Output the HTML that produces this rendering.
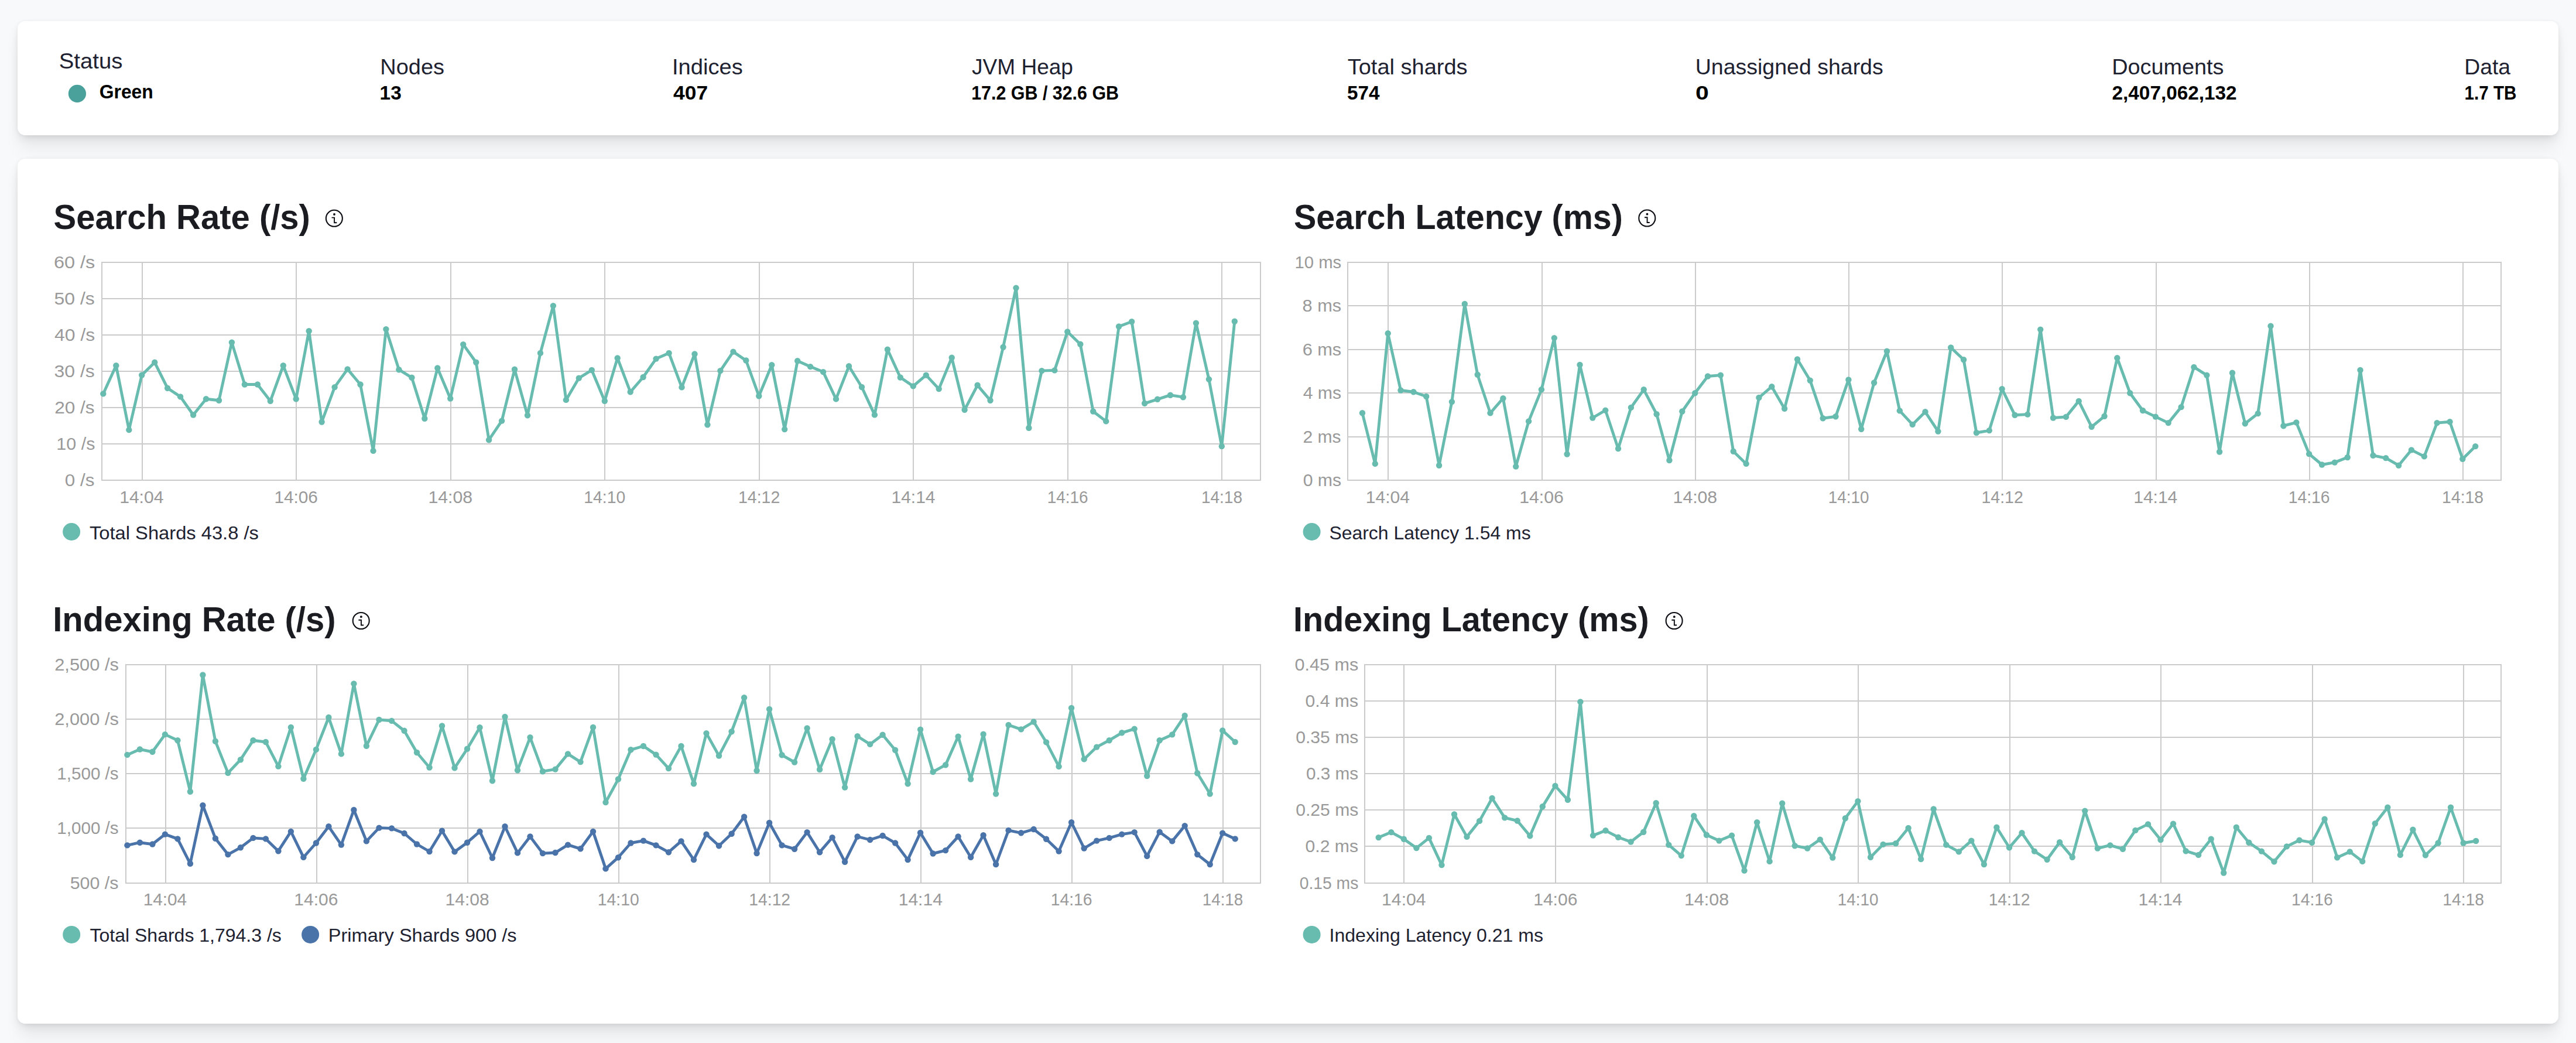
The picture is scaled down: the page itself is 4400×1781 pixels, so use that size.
<!DOCTYPE html>
<html><head><meta charset="utf-8"><style>
html,body{margin:0;padding:0;width:4400px;height:1781px;overflow:hidden;background:#F8F9FB;}
.p{position:absolute;left:30px;width:4340px;background:#fff;border-radius:13px;box-shadow:0 1.8px 8px -2px rgba(0,0,0,0.08),0 5.2px 16px -2px rgba(0,0,0,0.06),0 11.4px 24px -2px rgba(0,0,0,0.05),0 30px 30px -2px rgba(0,0,0,0.04);}
svg{position:absolute;left:0;top:0;}
text{font-family:"Liberation Sans",sans-serif;}
.st{font-size:37.5px;fill:#1D2130;}
.sv{font-size:32.5px;font-weight:bold;fill:#000;}
.tt{font-size:58.5px;font-weight:bold;fill:#1A1C21;}
.ax{font-size:30px;fill:#999999;letter-spacing:1.3px;}
.lg{font-size:31.5px;fill:#1D2130;}
</style></head><body>
<div class="p" style="top:36px;height:195px"></div>
<div class="p" style="top:271px;height:1477px"></div>
<svg width="4400" height="1781" viewBox="0 0 4400 1781">
<text class="st" transform="translate(100.73 116.60) scale(1.0219 1)" style="letter-spacing:0">Status</text>
<circle cx="131.9" cy="159.9" r="15.1" fill="#4AA19B"/>
<text class="sv" transform="translate(169.74 168.40) scale(0.9802 1)" style="letter-spacing:0">Green</text>
<text class="st" transform="translate(649.36 126.50) scale(1.0117 1)" style="letter-spacing:0">Nodes</text>
<text class="sv" transform="translate(648.62 169.70) scale(1.0264 1)" style="letter-spacing:0">13</text>
<text class="st" transform="translate(1147.93 126.50) scale(1.0178 1)" style="letter-spacing:0">Indices</text>
<text class="sv" transform="translate(1150.05 169.70) scale(1.0894 1)" style="letter-spacing:0">407</text>
<text class="st" transform="translate(1660.01 126.50) scale(0.9884 1)" style="letter-spacing:0">JVM Heap</text>
<text class="sv" transform="translate(1659.13 169.70) scale(0.9366 1)" style="letter-spacing:0">17.2 GB / 32.6 GB</text>
<text class="st" transform="translate(2301.68 126.50) scale(1.0141 1)" style="letter-spacing:0">Total shards</text>
<text class="sv" transform="translate(2301.06 169.70) scale(1.0236 1)" style="letter-spacing:0">574</text>
<text class="st" transform="translate(2895.70 126.50) scale(1.0000 1)" style="letter-spacing:0">Unassigned shards</text>
<text class="sv" transform="translate(2896.07 169.70) scale(1.2622 1)" style="letter-spacing:0">0</text>
<text class="st" transform="translate(3607.16 126.50) scale(1.0088 1)" style="letter-spacing:0">Documents</text>
<text class="sv" transform="translate(3607.55 169.70) scale(1.0254 1)" style="letter-spacing:0">2,407,062,132</text>
<text class="st" transform="translate(4209.29 126.50) scale(0.9954 1)" style="letter-spacing:0">Data</text>
<text class="sv" transform="translate(4209.45 169.70) scale(0.9129 1)" style="letter-spacing:0">1.7 TB</text>
<text class="tt" transform="translate(91.61 390.70) scale(0.9913 1)" style="letter-spacing:0">Search Rate (/s)</text>
<text class="tt" transform="translate(2209.93 390.70) scale(0.9824 1)" style="letter-spacing:0">Search Latency (ms)</text>
<text class="tt" transform="translate(90.23 1078.00) scale(0.9913 1)" style="letter-spacing:0">Indexing Rate (/s)</text>
<text class="tt" transform="translate(2209.06 1078.00) scale(0.9840 1)" style="letter-spacing:0">Indexing Latency (ms)</text>
<g><circle cx="570.85" cy="372.8" r="14" fill="none" stroke="#0B0D12" stroke-width="2.1"/><circle cx="571.00" cy="366.00" r="1.9" fill="#0B0D12"/><path d="M566.55 371.60 H571.10 V380.30 H575.35" fill="none" stroke="#0B0D12" stroke-width="1.9" stroke-linejoin="miter"/></g>
<g><circle cx="2813.3" cy="372.5" r="14" fill="none" stroke="#0B0D12" stroke-width="2.1"/><circle cx="2813.45" cy="365.70" r="1.9" fill="#0B0D12"/><path d="M2809.00 371.30 H2813.55 V380.00 H2817.80" fill="none" stroke="#0B0D12" stroke-width="1.9" stroke-linejoin="miter"/></g>
<g><circle cx="616.7" cy="1060" r="14" fill="none" stroke="#0B0D12" stroke-width="2.1"/><circle cx="616.85" cy="1053.20" r="1.9" fill="#0B0D12"/><path d="M612.40 1058.80 H616.95 V1067.50 H621.20" fill="none" stroke="#0B0D12" stroke-width="1.9" stroke-linejoin="miter"/></g>
<g><circle cx="2859.6" cy="1060" r="14" fill="none" stroke="#0B0D12" stroke-width="2.1"/><circle cx="2859.75" cy="1053.20" r="1.9" fill="#0B0D12"/><path d="M2855.30 1058.80 H2859.85 V1067.50 H2864.10" fill="none" stroke="#0B0D12" stroke-width="1.9" stroke-linejoin="miter"/></g>
<g stroke="#CBCBCB" stroke-width="2" fill="none"><line x1="174" y1="448" x2="2153" y2="448"/><line x1="174" y1="510" x2="2153" y2="510"/><line x1="174" y1="572" x2="2153" y2="572"/><line x1="174" y1="634" x2="2153" y2="634"/><line x1="174" y1="696" x2="2153" y2="696"/><line x1="174" y1="758" x2="2153" y2="758"/><line x1="174" y1="820" x2="2153" y2="820"/><line x1="243" y1="448" x2="243" y2="820"/><line x1="506" y1="448" x2="506" y2="820"/><line x1="770" y1="448" x2="770" y2="820"/><line x1="1033" y1="448" x2="1033" y2="820"/><line x1="1297" y1="448" x2="1297" y2="820"/><line x1="1560" y1="448" x2="1560" y2="820"/><line x1="1824" y1="448" x2="1824" y2="820"/><line x1="2087" y1="448" x2="2087" y2="820"/><rect x="174" y="448" width="1979" height="372" fill="none"/></g>
<text class="ax" transform="translate(91.97 457.50) scale(1.0821 1)" style="letter-spacing:0">60 /s</text>
<text class="ax" transform="translate(92.53 519.63) scale(1.0658 1)" style="letter-spacing:0">50 /s</text>
<text class="ax" transform="translate(93.08 581.77) scale(1.0637 1)" style="letter-spacing:0">40 /s</text>
<text class="ax" transform="translate(92.52 643.90) scale(1.0650 1)" style="letter-spacing:0">30 /s</text>
<text class="ax" transform="translate(93.26 706.03) scale(1.0519 1)" style="letter-spacing:0">20 /s</text>
<text class="ax" transform="translate(96.37 768.17) scale(1.0159 1)" style="letter-spacing:0">10 /s</text>
<text class="ax" transform="translate(110.79 830.30) scale(1.0474 1)" style="letter-spacing:0">0 /s</text>
<text class="ax" transform="translate(204.20 858.50) scale(1.0019 1)" style="letter-spacing:0">14:04</text>
<text class="ax" transform="translate(468.40 858.50) scale(0.9932 1)" style="letter-spacing:0">14:06</text>
<text class="ax" transform="translate(731.49 858.50) scale(1.0078 1)" style="letter-spacing:0">14:08</text>
<text class="ax" transform="translate(997.30 858.50) scale(0.9445 1)" style="letter-spacing:0">14:10</text>
<text class="ax" transform="translate(1260.99 858.50) scale(0.9502 1)" style="letter-spacing:0">14:12</text>
<text class="ax" transform="translate(1522.48 858.50) scale(1.0002 1)" style="letter-spacing:0">14:14</text>
<text class="ax" transform="translate(1788.85 858.50) scale(0.9288 1)" style="letter-spacing:0">14:16</text>
<text class="ax" transform="translate(2051.95 858.50) scale(0.9328 1)" style="letter-spacing:0">14:18</text>
<path d="M176.3 672.4 L198.3 624.2 L220.3 734.1 L242.2 640.5 L264.2 618.8 L286.1 662.7 L308.1 677.4 L330.1 708.5 L352.0 681.3 L374.0 683.7 L395.9 584.6 L417.9 656.5 L439.9 656.5 L461.8 684.8 L483.8 624.2 L505.7 681.3 L527.7 565.2 L549.6 720.5 L571.6 661.1 L593.6 630.4 L615.5 656.5 L637.5 769.9 L659.4 562.1 L681.4 631.2 L703.4 644.8 L725.3 714.7 L747.3 628.5 L769.2 680.5 L791.2 588.1 L813.2 618.8 L835.1 751.2 L857.1 718.6 L879.0 630.8 L901.0 709.3 L923.0 602.9 L944.9 522.1 L966.9 682.9 L988.8 645.6 L1010.8 632.0 L1032.8 684.8 L1054.7 611.4 L1076.7 669.3 L1098.6 644.0 L1120.6 612.6 L1142.6 602.9 L1164.5 661.4 L1186.5 604.5 L1208.4 725.3 L1230.4 633.1 L1252.4 600.6 L1274.3 615.5 L1296.3 676.3 L1318.2 623.3 L1340.2 733.1 L1362.2 616.3 L1384.1 626.1 L1406.1 635.1 L1428.0 681.4 L1450.0 625.3 L1472.0 661.0 L1493.9 708.4 L1515.9 596.7 L1537.8 644.5 L1559.8 659.4 L1581.8 640.6 L1603.7 664.1 L1625.7 610.8 L1647.6 699.8 L1669.6 657.8 L1691.5 683.7 L1713.5 592.8 L1735.5 491.6 L1757.4 730.8 L1779.4 633.1 L1801.3 632.4 L1823.3 566.5 L1845.3 587.7 L1867.2 702.5 L1889.2 719.4 L1911.1 557.5 L1933.1 549.2 L1955.1 688.8 L1977.0 681.8 L1999.0 674.7 L2020.9 678.2 L2042.9 551.6 L2064.9 647.6 L2086.8 762.1 L2108.8 548.8" fill="none" stroke="#67BBAF" stroke-width="4.9" stroke-linejoin="round"/>
<g fill="#67BBAF"><circle cx="176.3" cy="672.4" r="5.2"/><circle cx="198.3" cy="624.2" r="5.2"/><circle cx="220.3" cy="734.1" r="5.2"/><circle cx="242.2" cy="640.5" r="5.2"/><circle cx="264.2" cy="618.8" r="5.2"/><circle cx="286.1" cy="662.7" r="5.2"/><circle cx="308.1" cy="677.4" r="5.2"/><circle cx="330.1" cy="708.5" r="5.2"/><circle cx="352.0" cy="681.3" r="5.2"/><circle cx="374.0" cy="683.7" r="5.2"/><circle cx="395.9" cy="584.6" r="5.2"/><circle cx="417.9" cy="656.5" r="5.2"/><circle cx="439.9" cy="656.5" r="5.2"/><circle cx="461.8" cy="684.8" r="5.2"/><circle cx="483.8" cy="624.2" r="5.2"/><circle cx="505.7" cy="681.3" r="5.2"/><circle cx="527.7" cy="565.2" r="5.2"/><circle cx="549.6" cy="720.5" r="5.2"/><circle cx="571.6" cy="661.1" r="5.2"/><circle cx="593.6" cy="630.4" r="5.2"/><circle cx="615.5" cy="656.5" r="5.2"/><circle cx="637.5" cy="769.9" r="5.2"/><circle cx="659.4" cy="562.1" r="5.2"/><circle cx="681.4" cy="631.2" r="5.2"/><circle cx="703.4" cy="644.8" r="5.2"/><circle cx="725.3" cy="714.7" r="5.2"/><circle cx="747.3" cy="628.5" r="5.2"/><circle cx="769.2" cy="680.5" r="5.2"/><circle cx="791.2" cy="588.1" r="5.2"/><circle cx="813.2" cy="618.8" r="5.2"/><circle cx="835.1" cy="751.2" r="5.2"/><circle cx="857.1" cy="718.6" r="5.2"/><circle cx="879.0" cy="630.8" r="5.2"/><circle cx="901.0" cy="709.3" r="5.2"/><circle cx="923.0" cy="602.9" r="5.2"/><circle cx="944.9" cy="522.1" r="5.2"/><circle cx="966.9" cy="682.9" r="5.2"/><circle cx="988.8" cy="645.6" r="5.2"/><circle cx="1010.8" cy="632.0" r="5.2"/><circle cx="1032.8" cy="684.8" r="5.2"/><circle cx="1054.7" cy="611.4" r="5.2"/><circle cx="1076.7" cy="669.3" r="5.2"/><circle cx="1098.6" cy="644.0" r="5.2"/><circle cx="1120.6" cy="612.6" r="5.2"/><circle cx="1142.6" cy="602.9" r="5.2"/><circle cx="1164.5" cy="661.4" r="5.2"/><circle cx="1186.5" cy="604.5" r="5.2"/><circle cx="1208.4" cy="725.3" r="5.2"/><circle cx="1230.4" cy="633.1" r="5.2"/><circle cx="1252.4" cy="600.6" r="5.2"/><circle cx="1274.3" cy="615.5" r="5.2"/><circle cx="1296.3" cy="676.3" r="5.2"/><circle cx="1318.2" cy="623.3" r="5.2"/><circle cx="1340.2" cy="733.1" r="5.2"/><circle cx="1362.2" cy="616.3" r="5.2"/><circle cx="1384.1" cy="626.1" r="5.2"/><circle cx="1406.1" cy="635.1" r="5.2"/><circle cx="1428.0" cy="681.4" r="5.2"/><circle cx="1450.0" cy="625.3" r="5.2"/><circle cx="1472.0" cy="661.0" r="5.2"/><circle cx="1493.9" cy="708.4" r="5.2"/><circle cx="1515.9" cy="596.7" r="5.2"/><circle cx="1537.8" cy="644.5" r="5.2"/><circle cx="1559.8" cy="659.4" r="5.2"/><circle cx="1581.8" cy="640.6" r="5.2"/><circle cx="1603.7" cy="664.1" r="5.2"/><circle cx="1625.7" cy="610.8" r="5.2"/><circle cx="1647.6" cy="699.8" r="5.2"/><circle cx="1669.6" cy="657.8" r="5.2"/><circle cx="1691.5" cy="683.7" r="5.2"/><circle cx="1713.5" cy="592.8" r="5.2"/><circle cx="1735.5" cy="491.6" r="5.2"/><circle cx="1757.4" cy="730.8" r="5.2"/><circle cx="1779.4" cy="633.1" r="5.2"/><circle cx="1801.3" cy="632.4" r="5.2"/><circle cx="1823.3" cy="566.5" r="5.2"/><circle cx="1845.3" cy="587.7" r="5.2"/><circle cx="1867.2" cy="702.5" r="5.2"/><circle cx="1889.2" cy="719.4" r="5.2"/><circle cx="1911.1" cy="557.5" r="5.2"/><circle cx="1933.1" cy="549.2" r="5.2"/><circle cx="1955.1" cy="688.8" r="5.2"/><circle cx="1977.0" cy="681.8" r="5.2"/><circle cx="1999.0" cy="674.7" r="5.2"/><circle cx="2020.9" cy="678.2" r="5.2"/><circle cx="2042.9" cy="551.6" r="5.2"/><circle cx="2064.9" cy="647.6" r="5.2"/><circle cx="2086.8" cy="762.1" r="5.2"/><circle cx="2108.8" cy="548.8" r="5.2"/></g>
<g stroke="#CBCBCB" stroke-width="2" fill="none"><line x1="2302" y1="448" x2="4272" y2="448"/><line x1="2302" y1="522" x2="4272" y2="522"/><line x1="2302" y1="597" x2="4272" y2="597"/><line x1="2302" y1="671" x2="4272" y2="671"/><line x1="2302" y1="746" x2="4272" y2="746"/><line x1="2302" y1="820" x2="4272" y2="820"/><line x1="2371" y1="448" x2="2371" y2="820"/><line x1="2634" y1="448" x2="2634" y2="820"/><line x1="2896" y1="448" x2="2896" y2="820"/><line x1="3158" y1="448" x2="3158" y2="820"/><line x1="3420" y1="448" x2="3420" y2="820"/><line x1="3683" y1="448" x2="3683" y2="820"/><line x1="3945" y1="448" x2="3945" y2="820"/><line x1="4207" y1="448" x2="4207" y2="820"/><rect x="2302" y="448" width="1970" height="372" fill="none"/></g>
<text class="ax" transform="translate(2211.56 457.50) scale(0.9750 1)" style="letter-spacing:0">10 ms</text>
<text class="ax" transform="translate(2224.61 532.06) scale(1.0233 1)" style="letter-spacing:0">8 ms</text>
<text class="ax" transform="translate(2224.65 606.62) scale(1.0246 1)" style="letter-spacing:0">6 ms</text>
<text class="ax" transform="translate(2225.70 681.18) scale(1.0062 1)" style="letter-spacing:0">4 ms</text>
<text class="ax" transform="translate(2225.49 755.74) scale(1.0027 1)" style="letter-spacing:0">2 ms</text>
<text class="ax" transform="translate(2225.63 830.30) scale(1.0071 1)" style="letter-spacing:0">0 ms</text>
<text class="ax" transform="translate(2332.86 858.50) scale(1.0017 1)" style="letter-spacing:0">14:04</text>
<text class="ax" transform="translate(2595.20 858.50) scale(1.0076 1)" style="letter-spacing:0">14:06</text>
<text class="ax" transform="translate(2857.58 858.50) scale(1.0073 1)" style="letter-spacing:0">14:08</text>
<text class="ax" transform="translate(3122.69 858.50) scale(0.9288 1)" style="letter-spacing:0">14:10</text>
<text class="ax" transform="translate(3384.50 858.50) scale(0.9502 1)" style="letter-spacing:0">14:12</text>
<text class="ax" transform="translate(3644.22 858.50) scale(1.0000 1)" style="letter-spacing:0">14:14</text>
<text class="ax" transform="translate(3908.77 858.50) scale(0.9433 1)" style="letter-spacing:0">14:16</text>
<text class="ax" transform="translate(4171.11 858.50) scale(0.9459 1)" style="letter-spacing:0">14:18</text>
<path d="M2327.0 705.3 L2348.8 791.9 L2370.7 569.2 L2392.5 666.5 L2414.4 669.2 L2436.2 677.0 L2458.1 794.7 L2479.9 686.1 L2501.8 519.0 L2523.7 639.8 L2545.5 705.3 L2567.4 680.2 L2589.2 796.6 L2611.1 719.4 L2632.9 665.3 L2654.8 577.1 L2676.6 775.5 L2698.5 622.9 L2720.3 713.5 L2742.2 700.6 L2764.0 766.1 L2785.9 695.9 L2807.7 665.3 L2829.6 707.2 L2851.4 786.0 L2873.3 702.5 L2895.2 671.2 L2917.0 642.5 L2938.9 640.6 L2960.7 770.8 L2982.6 791.9 L3004.4 679.0 L3026.3 660.2 L3048.1 697.8 L3070.0 613.5 L3091.8 649.6 L3113.7 714.3 L3135.5 711.2 L3157.4 648.4 L3179.2 732.7 L3201.1 653.5 L3223.0 599.8 L3244.8 701.4 L3266.7 724.9 L3288.5 703.3 L3310.4 736.6 L3332.2 593.5 L3354.1 614.3 L3375.9 739.0 L3397.8 735.1 L3419.6 664.1 L3441.5 708.8 L3463.3 707.6 L3485.2 562.6 L3507.0 713.5 L3528.9 711.9 L3550.7 684.9 L3572.6 728.8 L3594.5 710.8 L3616.3 611.2 L3638.2 671.2 L3660.0 701.0 L3681.9 711.6 L3703.7 722.1 L3725.6 695.1 L3747.4 626.9 L3769.3 640.6 L3791.1 771.5 L3813.0 636.7 L3834.8 723.3 L3856.7 706.1 L3878.5 556.7 L3900.4 727.2 L3922.3 721.4 L3944.1 775.1 L3966.0 793.5 L3987.8 789.6 L4009.7 781.0 L4031.5 632.0 L4053.4 777.8 L4075.2 782.1 L4097.1 794.7 L4118.9 768.4 L4140.8 779.4 L4162.6 722.1 L4184.5 720.2 L4206.3 783.7 L4228.2 762.1" fill="none" stroke="#67BBAF" stroke-width="4.9" stroke-linejoin="round"/>
<g fill="#67BBAF"><circle cx="2327.0" cy="705.3" r="5.2"/><circle cx="2348.8" cy="791.9" r="5.2"/><circle cx="2370.7" cy="569.2" r="5.2"/><circle cx="2392.5" cy="666.5" r="5.2"/><circle cx="2414.4" cy="669.2" r="5.2"/><circle cx="2436.2" cy="677.0" r="5.2"/><circle cx="2458.1" cy="794.7" r="5.2"/><circle cx="2479.9" cy="686.1" r="5.2"/><circle cx="2501.8" cy="519.0" r="5.2"/><circle cx="2523.7" cy="639.8" r="5.2"/><circle cx="2545.5" cy="705.3" r="5.2"/><circle cx="2567.4" cy="680.2" r="5.2"/><circle cx="2589.2" cy="796.6" r="5.2"/><circle cx="2611.1" cy="719.4" r="5.2"/><circle cx="2632.9" cy="665.3" r="5.2"/><circle cx="2654.8" cy="577.1" r="5.2"/><circle cx="2676.6" cy="775.5" r="5.2"/><circle cx="2698.5" cy="622.9" r="5.2"/><circle cx="2720.3" cy="713.5" r="5.2"/><circle cx="2742.2" cy="700.6" r="5.2"/><circle cx="2764.0" cy="766.1" r="5.2"/><circle cx="2785.9" cy="695.9" r="5.2"/><circle cx="2807.7" cy="665.3" r="5.2"/><circle cx="2829.6" cy="707.2" r="5.2"/><circle cx="2851.4" cy="786.0" r="5.2"/><circle cx="2873.3" cy="702.5" r="5.2"/><circle cx="2895.2" cy="671.2" r="5.2"/><circle cx="2917.0" cy="642.5" r="5.2"/><circle cx="2938.9" cy="640.6" r="5.2"/><circle cx="2960.7" cy="770.8" r="5.2"/><circle cx="2982.6" cy="791.9" r="5.2"/><circle cx="3004.4" cy="679.0" r="5.2"/><circle cx="3026.3" cy="660.2" r="5.2"/><circle cx="3048.1" cy="697.8" r="5.2"/><circle cx="3070.0" cy="613.5" r="5.2"/><circle cx="3091.8" cy="649.6" r="5.2"/><circle cx="3113.7" cy="714.3" r="5.2"/><circle cx="3135.5" cy="711.2" r="5.2"/><circle cx="3157.4" cy="648.4" r="5.2"/><circle cx="3179.2" cy="732.7" r="5.2"/><circle cx="3201.1" cy="653.5" r="5.2"/><circle cx="3223.0" cy="599.8" r="5.2"/><circle cx="3244.8" cy="701.4" r="5.2"/><circle cx="3266.7" cy="724.9" r="5.2"/><circle cx="3288.5" cy="703.3" r="5.2"/><circle cx="3310.4" cy="736.6" r="5.2"/><circle cx="3332.2" cy="593.5" r="5.2"/><circle cx="3354.1" cy="614.3" r="5.2"/><circle cx="3375.9" cy="739.0" r="5.2"/><circle cx="3397.8" cy="735.1" r="5.2"/><circle cx="3419.6" cy="664.1" r="5.2"/><circle cx="3441.5" cy="708.8" r="5.2"/><circle cx="3463.3" cy="707.6" r="5.2"/><circle cx="3485.2" cy="562.6" r="5.2"/><circle cx="3507.0" cy="713.5" r="5.2"/><circle cx="3528.9" cy="711.9" r="5.2"/><circle cx="3550.7" cy="684.9" r="5.2"/><circle cx="3572.6" cy="728.8" r="5.2"/><circle cx="3594.5" cy="710.8" r="5.2"/><circle cx="3616.3" cy="611.2" r="5.2"/><circle cx="3638.2" cy="671.2" r="5.2"/><circle cx="3660.0" cy="701.0" r="5.2"/><circle cx="3681.9" cy="711.6" r="5.2"/><circle cx="3703.7" cy="722.1" r="5.2"/><circle cx="3725.6" cy="695.1" r="5.2"/><circle cx="3747.4" cy="626.9" r="5.2"/><circle cx="3769.3" cy="640.6" r="5.2"/><circle cx="3791.1" cy="771.5" r="5.2"/><circle cx="3813.0" cy="636.7" r="5.2"/><circle cx="3834.8" cy="723.3" r="5.2"/><circle cx="3856.7" cy="706.1" r="5.2"/><circle cx="3878.5" cy="556.7" r="5.2"/><circle cx="3900.4" cy="727.2" r="5.2"/><circle cx="3922.3" cy="721.4" r="5.2"/><circle cx="3944.1" cy="775.1" r="5.2"/><circle cx="3966.0" cy="793.5" r="5.2"/><circle cx="3987.8" cy="789.6" r="5.2"/><circle cx="4009.7" cy="781.0" r="5.2"/><circle cx="4031.5" cy="632.0" r="5.2"/><circle cx="4053.4" cy="777.8" r="5.2"/><circle cx="4075.2" cy="782.1" r="5.2"/><circle cx="4097.1" cy="794.7" r="5.2"/><circle cx="4118.9" cy="768.4" r="5.2"/><circle cx="4140.8" cy="779.4" r="5.2"/><circle cx="4162.6" cy="722.1" r="5.2"/><circle cx="4184.5" cy="720.2" r="5.2"/><circle cx="4206.3" cy="783.7" r="5.2"/><circle cx="4228.2" cy="762.1" r="5.2"/></g>
<g stroke="#CBCBCB" stroke-width="2" fill="none"><line x1="215" y1="1135" x2="2153" y2="1135"/><line x1="215" y1="1228" x2="2153" y2="1228"/><line x1="215" y1="1321" x2="2153" y2="1321"/><line x1="215" y1="1414" x2="2153" y2="1414"/><line x1="215" y1="1508" x2="2153" y2="1508"/><line x1="283" y1="1135" x2="283" y2="1508"/><line x1="541" y1="1135" x2="541" y2="1508"/><line x1="799" y1="1135" x2="799" y2="1508"/><line x1="1057" y1="1135" x2="1057" y2="1508"/><line x1="1315" y1="1135" x2="1315" y2="1508"/><line x1="1573" y1="1135" x2="1573" y2="1508"/><line x1="1831" y1="1135" x2="1831" y2="1508"/><line x1="2089" y1="1135" x2="2089" y2="1508"/><rect x="215" y="1135" width="1938" height="373" fill="none"/></g>
<text class="ax" transform="translate(93.23 1144.90) scale(1.0272 1)" style="letter-spacing:0">2,500 /s</text>
<text class="ax" transform="translate(93.23 1238.08) scale(1.0272 1)" style="letter-spacing:0">2,000 /s</text>
<text class="ax" transform="translate(97.31 1331.25) scale(0.9869 1)" style="letter-spacing:0">1,500 /s</text>
<text class="ax" transform="translate(97.31 1424.42) scale(0.9869 1)" style="letter-spacing:0">1,000 /s</text>
<text class="ax" transform="translate(119.67 1517.60) scale(1.0138 1)" style="letter-spacing:0">500 /s</text>
<text class="ax" transform="translate(244.63 1545.60) scale(0.9916 1)" style="letter-spacing:0">14:04</text>
<text class="ax" transform="translate(502.29 1545.60) scale(1.0004 1)" style="letter-spacing:0">14:06</text>
<text class="ax" transform="translate(760.58 1545.60) scale(1.0004 1)" style="letter-spacing:0">14:08</text>
<text class="ax" transform="translate(1020.82 1545.60) scale(0.9433 1)" style="letter-spacing:0">14:10</text>
<text class="ax" transform="translate(1279.33 1545.60) scale(0.9430 1)" style="letter-spacing:0">14:12</text>
<text class="ax" transform="translate(1534.74 1545.60) scale(1.0000 1)" style="letter-spacing:0">14:14</text>
<text class="ax" transform="translate(1794.72 1545.60) scale(0.9431 1)" style="letter-spacing:0">14:16</text>
<text class="ax" transform="translate(2053.75 1545.60) scale(0.9261 1)" style="letter-spacing:0">14:18</text>
<path d="M217.4 1288.9 L238.9 1279.5 L260.4 1283.8 L281.9 1254.1 L303.4 1264.2 L324.9 1351.7 L346.4 1152.5 L367.9 1265.8 L389.4 1319.9 L410.9 1297.2 L432.4 1264.2 L453.9 1267.0 L475.4 1308.6 L496.9 1241.9 L518.4 1329.7 L539.9 1279.9 L561.4 1225.0 L582.9 1287.4 L604.4 1167.4 L625.9 1273.7 L647.5 1229.0 L669.0 1230.9 L690.5 1247.8 L712.0 1285.0 L733.5 1310.5 L755.0 1239.5 L776.5 1311.3 L798.0 1278.8 L819.5 1242.3 L841.0 1333.3 L862.5 1223.9 L884.0 1315.2 L905.5 1259.1 L927.0 1317.2 L948.5 1313.6 L970.0 1287.4 L991.5 1301.1 L1013.0 1241.9 L1034.5 1370.1 L1056.0 1330.5 L1077.5 1280.3 L1099.0 1274.0 L1120.5 1288.6 L1142.0 1312.1 L1163.5 1274.0 L1185.0 1338.3 L1206.5 1252.1 L1228.0 1290.5 L1249.6 1249.3 L1271.1 1191.3 L1292.6 1316.0 L1314.1 1210.9 L1335.6 1289.3 L1357.1 1301.5 L1378.6 1243.5 L1400.1 1314.0 L1421.6 1262.3 L1443.1 1344.6 L1464.6 1257.2 L1486.1 1270.9 L1507.6 1254.8 L1529.1 1280.7 L1550.6 1338.3 L1572.1 1245.8 L1593.6 1318.0 L1615.1 1306.2 L1636.6 1257.6 L1658.1 1330.5 L1679.6 1253.7 L1701.1 1355.6 L1722.6 1238.0 L1744.1 1245.4 L1765.6 1232.5 L1787.1 1267.4 L1808.6 1308.9 L1830.1 1209.0 L1851.7 1296.4 L1873.2 1275.6 L1894.7 1264.2 L1916.2 1251.3 L1937.7 1244.6 L1959.2 1325.0 L1980.7 1264.2 L2002.2 1254.4 L2023.7 1221.9 L2045.2 1320.3 L2066.7 1355.6 L2088.2 1247.4 L2109.7 1267.0" fill="none" stroke="#67BBAF" stroke-width="4.9" stroke-linejoin="round"/>
<g fill="#67BBAF"><circle cx="217.4" cy="1288.9" r="5.2"/><circle cx="238.9" cy="1279.5" r="5.2"/><circle cx="260.4" cy="1283.8" r="5.2"/><circle cx="281.9" cy="1254.1" r="5.2"/><circle cx="303.4" cy="1264.2" r="5.2"/><circle cx="324.9" cy="1351.7" r="5.2"/><circle cx="346.4" cy="1152.5" r="5.2"/><circle cx="367.9" cy="1265.8" r="5.2"/><circle cx="389.4" cy="1319.9" r="5.2"/><circle cx="410.9" cy="1297.2" r="5.2"/><circle cx="432.4" cy="1264.2" r="5.2"/><circle cx="453.9" cy="1267.0" r="5.2"/><circle cx="475.4" cy="1308.6" r="5.2"/><circle cx="496.9" cy="1241.9" r="5.2"/><circle cx="518.4" cy="1329.7" r="5.2"/><circle cx="539.9" cy="1279.9" r="5.2"/><circle cx="561.4" cy="1225.0" r="5.2"/><circle cx="582.9" cy="1287.4" r="5.2"/><circle cx="604.4" cy="1167.4" r="5.2"/><circle cx="625.9" cy="1273.7" r="5.2"/><circle cx="647.5" cy="1229.0" r="5.2"/><circle cx="669.0" cy="1230.9" r="5.2"/><circle cx="690.5" cy="1247.8" r="5.2"/><circle cx="712.0" cy="1285.0" r="5.2"/><circle cx="733.5" cy="1310.5" r="5.2"/><circle cx="755.0" cy="1239.5" r="5.2"/><circle cx="776.5" cy="1311.3" r="5.2"/><circle cx="798.0" cy="1278.8" r="5.2"/><circle cx="819.5" cy="1242.3" r="5.2"/><circle cx="841.0" cy="1333.3" r="5.2"/><circle cx="862.5" cy="1223.9" r="5.2"/><circle cx="884.0" cy="1315.2" r="5.2"/><circle cx="905.5" cy="1259.1" r="5.2"/><circle cx="927.0" cy="1317.2" r="5.2"/><circle cx="948.5" cy="1313.6" r="5.2"/><circle cx="970.0" cy="1287.4" r="5.2"/><circle cx="991.5" cy="1301.1" r="5.2"/><circle cx="1013.0" cy="1241.9" r="5.2"/><circle cx="1034.5" cy="1370.1" r="5.2"/><circle cx="1056.0" cy="1330.5" r="5.2"/><circle cx="1077.5" cy="1280.3" r="5.2"/><circle cx="1099.0" cy="1274.0" r="5.2"/><circle cx="1120.5" cy="1288.6" r="5.2"/><circle cx="1142.0" cy="1312.1" r="5.2"/><circle cx="1163.5" cy="1274.0" r="5.2"/><circle cx="1185.0" cy="1338.3" r="5.2"/><circle cx="1206.5" cy="1252.1" r="5.2"/><circle cx="1228.0" cy="1290.5" r="5.2"/><circle cx="1249.6" cy="1249.3" r="5.2"/><circle cx="1271.1" cy="1191.3" r="5.2"/><circle cx="1292.6" cy="1316.0" r="5.2"/><circle cx="1314.1" cy="1210.9" r="5.2"/><circle cx="1335.6" cy="1289.3" r="5.2"/><circle cx="1357.1" cy="1301.5" r="5.2"/><circle cx="1378.6" cy="1243.5" r="5.2"/><circle cx="1400.1" cy="1314.0" r="5.2"/><circle cx="1421.6" cy="1262.3" r="5.2"/><circle cx="1443.1" cy="1344.6" r="5.2"/><circle cx="1464.6" cy="1257.2" r="5.2"/><circle cx="1486.1" cy="1270.9" r="5.2"/><circle cx="1507.6" cy="1254.8" r="5.2"/><circle cx="1529.1" cy="1280.7" r="5.2"/><circle cx="1550.6" cy="1338.3" r="5.2"/><circle cx="1572.1" cy="1245.8" r="5.2"/><circle cx="1593.6" cy="1318.0" r="5.2"/><circle cx="1615.1" cy="1306.2" r="5.2"/><circle cx="1636.6" cy="1257.6" r="5.2"/><circle cx="1658.1" cy="1330.5" r="5.2"/><circle cx="1679.6" cy="1253.7" r="5.2"/><circle cx="1701.1" cy="1355.6" r="5.2"/><circle cx="1722.6" cy="1238.0" r="5.2"/><circle cx="1744.1" cy="1245.4" r="5.2"/><circle cx="1765.6" cy="1232.5" r="5.2"/><circle cx="1787.1" cy="1267.4" r="5.2"/><circle cx="1808.6" cy="1308.9" r="5.2"/><circle cx="1830.1" cy="1209.0" r="5.2"/><circle cx="1851.7" cy="1296.4" r="5.2"/><circle cx="1873.2" cy="1275.6" r="5.2"/><circle cx="1894.7" cy="1264.2" r="5.2"/><circle cx="1916.2" cy="1251.3" r="5.2"/><circle cx="1937.7" cy="1244.6" r="5.2"/><circle cx="1959.2" cy="1325.0" r="5.2"/><circle cx="1980.7" cy="1264.2" r="5.2"/><circle cx="2002.2" cy="1254.4" r="5.2"/><circle cx="2023.7" cy="1221.9" r="5.2"/><circle cx="2045.2" cy="1320.3" r="5.2"/><circle cx="2066.7" cy="1355.6" r="5.2"/><circle cx="2088.2" cy="1247.4" r="5.2"/><circle cx="2109.7" cy="1267.0" r="5.2"/></g>
<path d="M217.4 1443.4 L238.9 1438.7 L260.4 1441.5 L281.9 1424.6 L303.4 1432.4 L324.9 1474.8 L346.4 1375.2 L367.9 1431.7 L389.4 1459.1 L410.9 1447.3 L432.4 1430.9 L453.9 1432.4 L475.4 1453.2 L496.9 1419.9 L518.4 1463.8 L539.9 1439.5 L561.4 1411.3 L582.9 1442.6 L604.4 1383.0 L625.9 1436.4 L647.5 1413.6 L669.0 1414.4 L690.5 1423.0 L712.0 1441.5 L733.5 1454.0 L755.0 1418.7 L776.5 1454.4 L798.0 1438.7 L819.5 1419.9 L841.0 1465.0 L862.5 1411.3 L884.0 1456.4 L905.5 1428.5 L927.0 1457.1 L948.5 1456.0 L970.0 1442.6 L991.5 1449.3 L1013.0 1419.9 L1034.5 1483.4 L1056.0 1464.2 L1077.5 1439.5 L1099.0 1435.6 L1120.5 1443.4 L1142.0 1455.2 L1163.5 1436.4 L1185.0 1468.1 L1206.5 1424.6 L1228.0 1444.2 L1249.6 1423.8 L1271.1 1394.8 L1292.6 1457.1 L1314.1 1405.0 L1335.6 1443.4 L1357.1 1449.7 L1378.6 1421.1 L1400.1 1455.2 L1421.6 1430.1 L1443.1 1471.7 L1464.6 1428.5 L1486.1 1434.0 L1507.6 1427.0 L1529.1 1439.5 L1550.6 1468.1 L1572.1 1421.9 L1593.6 1457.5 L1615.1 1452.1 L1636.6 1428.5 L1658.1 1463.8 L1679.6 1426.2 L1701.1 1476.0 L1722.6 1417.9 L1744.1 1422.3 L1765.6 1416.0 L1787.1 1432.8 L1808.6 1453.6 L1830.1 1404.2 L1851.7 1448.5 L1873.2 1435.6 L1894.7 1430.9 L1916.2 1424.6 L1937.7 1421.1 L1959.2 1461.9 L1980.7 1420.7 L2002.2 1436.4 L2023.7 1410.1 L2045.2 1459.1 L2066.7 1476.0 L2088.2 1422.6 L2109.7 1432.4" fill="none" stroke="#4973A9" stroke-width="4.9" stroke-linejoin="round"/>
<g fill="#4973A9"><circle cx="217.4" cy="1443.4" r="5.2"/><circle cx="238.9" cy="1438.7" r="5.2"/><circle cx="260.4" cy="1441.5" r="5.2"/><circle cx="281.9" cy="1424.6" r="5.2"/><circle cx="303.4" cy="1432.4" r="5.2"/><circle cx="324.9" cy="1474.8" r="5.2"/><circle cx="346.4" cy="1375.2" r="5.2"/><circle cx="367.9" cy="1431.7" r="5.2"/><circle cx="389.4" cy="1459.1" r="5.2"/><circle cx="410.9" cy="1447.3" r="5.2"/><circle cx="432.4" cy="1430.9" r="5.2"/><circle cx="453.9" cy="1432.4" r="5.2"/><circle cx="475.4" cy="1453.2" r="5.2"/><circle cx="496.9" cy="1419.9" r="5.2"/><circle cx="518.4" cy="1463.8" r="5.2"/><circle cx="539.9" cy="1439.5" r="5.2"/><circle cx="561.4" cy="1411.3" r="5.2"/><circle cx="582.9" cy="1442.6" r="5.2"/><circle cx="604.4" cy="1383.0" r="5.2"/><circle cx="625.9" cy="1436.4" r="5.2"/><circle cx="647.5" cy="1413.6" r="5.2"/><circle cx="669.0" cy="1414.4" r="5.2"/><circle cx="690.5" cy="1423.0" r="5.2"/><circle cx="712.0" cy="1441.5" r="5.2"/><circle cx="733.5" cy="1454.0" r="5.2"/><circle cx="755.0" cy="1418.7" r="5.2"/><circle cx="776.5" cy="1454.4" r="5.2"/><circle cx="798.0" cy="1438.7" r="5.2"/><circle cx="819.5" cy="1419.9" r="5.2"/><circle cx="841.0" cy="1465.0" r="5.2"/><circle cx="862.5" cy="1411.3" r="5.2"/><circle cx="884.0" cy="1456.4" r="5.2"/><circle cx="905.5" cy="1428.5" r="5.2"/><circle cx="927.0" cy="1457.1" r="5.2"/><circle cx="948.5" cy="1456.0" r="5.2"/><circle cx="970.0" cy="1442.6" r="5.2"/><circle cx="991.5" cy="1449.3" r="5.2"/><circle cx="1013.0" cy="1419.9" r="5.2"/><circle cx="1034.5" cy="1483.4" r="5.2"/><circle cx="1056.0" cy="1464.2" r="5.2"/><circle cx="1077.5" cy="1439.5" r="5.2"/><circle cx="1099.0" cy="1435.6" r="5.2"/><circle cx="1120.5" cy="1443.4" r="5.2"/><circle cx="1142.0" cy="1455.2" r="5.2"/><circle cx="1163.5" cy="1436.4" r="5.2"/><circle cx="1185.0" cy="1468.1" r="5.2"/><circle cx="1206.5" cy="1424.6" r="5.2"/><circle cx="1228.0" cy="1444.2" r="5.2"/><circle cx="1249.6" cy="1423.8" r="5.2"/><circle cx="1271.1" cy="1394.8" r="5.2"/><circle cx="1292.6" cy="1457.1" r="5.2"/><circle cx="1314.1" cy="1405.0" r="5.2"/><circle cx="1335.6" cy="1443.4" r="5.2"/><circle cx="1357.1" cy="1449.7" r="5.2"/><circle cx="1378.6" cy="1421.1" r="5.2"/><circle cx="1400.1" cy="1455.2" r="5.2"/><circle cx="1421.6" cy="1430.1" r="5.2"/><circle cx="1443.1" cy="1471.7" r="5.2"/><circle cx="1464.6" cy="1428.5" r="5.2"/><circle cx="1486.1" cy="1434.0" r="5.2"/><circle cx="1507.6" cy="1427.0" r="5.2"/><circle cx="1529.1" cy="1439.5" r="5.2"/><circle cx="1550.6" cy="1468.1" r="5.2"/><circle cx="1572.1" cy="1421.9" r="5.2"/><circle cx="1593.6" cy="1457.5" r="5.2"/><circle cx="1615.1" cy="1452.1" r="5.2"/><circle cx="1636.6" cy="1428.5" r="5.2"/><circle cx="1658.1" cy="1463.8" r="5.2"/><circle cx="1679.6" cy="1426.2" r="5.2"/><circle cx="1701.1" cy="1476.0" r="5.2"/><circle cx="1722.6" cy="1417.9" r="5.2"/><circle cx="1744.1" cy="1422.3" r="5.2"/><circle cx="1765.6" cy="1416.0" r="5.2"/><circle cx="1787.1" cy="1432.8" r="5.2"/><circle cx="1808.6" cy="1453.6" r="5.2"/><circle cx="1830.1" cy="1404.2" r="5.2"/><circle cx="1851.7" cy="1448.5" r="5.2"/><circle cx="1873.2" cy="1435.6" r="5.2"/><circle cx="1894.7" cy="1430.9" r="5.2"/><circle cx="1916.2" cy="1424.6" r="5.2"/><circle cx="1937.7" cy="1421.1" r="5.2"/><circle cx="1959.2" cy="1461.9" r="5.2"/><circle cx="1980.7" cy="1420.7" r="5.2"/><circle cx="2002.2" cy="1436.4" r="5.2"/><circle cx="2023.7" cy="1410.1" r="5.2"/><circle cx="2045.2" cy="1459.1" r="5.2"/><circle cx="2066.7" cy="1476.0" r="5.2"/><circle cx="2088.2" cy="1422.6" r="5.2"/><circle cx="2109.7" cy="1432.4" r="5.2"/></g>
<g stroke="#CBCBCB" stroke-width="2" fill="none"><line x1="2331" y1="1135" x2="4272" y2="1135"/><line x1="2331" y1="1197" x2="4272" y2="1197"/><line x1="2331" y1="1259" x2="4272" y2="1259"/><line x1="2331" y1="1321" x2="4272" y2="1321"/><line x1="2331" y1="1383" x2="4272" y2="1383"/><line x1="2331" y1="1445" x2="4272" y2="1445"/><line x1="2331" y1="1508" x2="4272" y2="1508"/><line x1="2398" y1="1135" x2="2398" y2="1508"/><line x1="2657" y1="1135" x2="2657" y2="1508"/><line x1="2916" y1="1135" x2="2916" y2="1508"/><line x1="3174" y1="1135" x2="3174" y2="1508"/><line x1="3433" y1="1135" x2="3433" y2="1508"/><line x1="3691" y1="1135" x2="3691" y2="1508"/><line x1="3950" y1="1135" x2="3950" y2="1508"/><line x1="4208" y1="1135" x2="4208" y2="1508"/><rect x="2331" y="1135" width="1941" height="373" fill="none"/></g>
<text class="ax" transform="translate(2211.49 1144.90) scale(1.0189 1)" style="letter-spacing:0">0.45 ms</text>
<text class="ax" transform="translate(2229.60 1207.02) scale(1.0052 1)" style="letter-spacing:0">0.4 ms</text>
<text class="ax" transform="translate(2213.13 1269.13) scale(1.0049 1)" style="letter-spacing:0">0.35 ms</text>
<text class="ax" transform="translate(2230.91 1331.25) scale(0.9908 1)" style="letter-spacing:0">0.3 ms</text>
<text class="ax" transform="translate(2213.13 1393.37) scale(1.0049 1)" style="letter-spacing:0">0.25 ms</text>
<text class="ax" transform="translate(2229.60 1455.48) scale(1.0052 1)" style="letter-spacing:0">0.2 ms</text>
<text class="ax" transform="translate(2219.67 1517.60) scale(0.9434 1)" style="letter-spacing:0">0.15 ms</text>
<text class="ax" transform="translate(2360.09 1545.60) scale(1.0057 1)" style="letter-spacing:0">14:04</text>
<text class="ax" transform="translate(2619.24 1545.60) scale(1.0002 1)" style="letter-spacing:0">14:06</text>
<text class="ax" transform="translate(2876.95 1545.60) scale(1.0146 1)" style="letter-spacing:0">14:08</text>
<text class="ax" transform="translate(3138.71 1545.60) scale(0.9288 1)" style="letter-spacing:0">14:10</text>
<text class="ax" transform="translate(3396.64 1545.60) scale(0.9430 1)" style="letter-spacing:0">14:12</text>
<text class="ax" transform="translate(3652.48 1545.60) scale(1.0002 1)" style="letter-spacing:0">14:14</text>
<text class="ax" transform="translate(3913.93 1545.60) scale(0.9429 1)" style="letter-spacing:0">14:16</text>
<text class="ax" transform="translate(4172.33 1545.60) scale(0.9411 1)" style="letter-spacing:0">14:18</text>
<path d="M2354.7 1430.1 L2376.3 1421.1 L2397.8 1432.8 L2419.4 1448.1 L2440.9 1430.9 L2462.5 1477.1 L2484.0 1390.5 L2505.5 1428.9 L2527.1 1401.9 L2548.6 1363.0 L2570.2 1396.4 L2591.7 1401.5 L2613.3 1427.4 L2634.8 1377.2 L2656.4 1341.9 L2677.9 1365.8 L2699.4 1198.4 L2721.0 1426.6 L2742.5 1418.3 L2764.1 1429.7 L2785.6 1437.5 L2807.2 1420.7 L2828.7 1371.3 L2850.3 1442.6 L2871.8 1461.1 L2893.3 1393.2 L2914.9 1425.8 L2936.4 1435.6 L2958.0 1426.6 L2979.5 1486.6 L3001.1 1404.2 L3022.6 1470.9 L3044.2 1371.7 L3065.7 1444.2 L3087.2 1448.5 L3108.8 1433.6 L3130.3 1464.6 L3151.9 1397.2 L3173.4 1368.1 L3195.0 1463.8 L3216.5 1441.9 L3238.1 1440.3 L3259.6 1414.0 L3281.1 1467.0 L3302.7 1381.5 L3324.2 1442.6 L3345.8 1454.4 L3367.3 1435.6 L3388.9 1476.0 L3410.4 1412.8 L3432.0 1447.3 L3453.5 1422.3 L3475.0 1453.6 L3496.6 1467.7 L3518.1 1438.3 L3539.7 1463.8 L3561.2 1384.6 L3582.8 1448.5 L3604.3 1443.4 L3625.9 1449.7 L3647.4 1417.9 L3669.0 1407.4 L3690.5 1434.0 L3712.0 1406.6 L3733.6 1453.2 L3755.1 1459.9 L3776.7 1432.8 L3798.2 1490.5 L3819.8 1412.8 L3841.3 1438.7 L3862.9 1453.6 L3884.4 1471.3 L3905.9 1445.4 L3927.5 1434.8 L3949.0 1438.7 L3970.6 1398.7 L3992.1 1464.2 L4013.7 1454.4 L4035.2 1470.9 L4056.8 1406.2 L4078.3 1378.7 L4099.8 1459.9 L4121.4 1416.8 L4142.9 1460.3 L4164.5 1439.5 L4186.0 1378.7 L4207.6 1439.5 L4229.1 1436.0" fill="none" stroke="#67BBAF" stroke-width="4.9" stroke-linejoin="round"/>
<g fill="#67BBAF"><circle cx="2354.7" cy="1430.1" r="5.2"/><circle cx="2376.3" cy="1421.1" r="5.2"/><circle cx="2397.8" cy="1432.8" r="5.2"/><circle cx="2419.4" cy="1448.1" r="5.2"/><circle cx="2440.9" cy="1430.9" r="5.2"/><circle cx="2462.5" cy="1477.1" r="5.2"/><circle cx="2484.0" cy="1390.5" r="5.2"/><circle cx="2505.5" cy="1428.9" r="5.2"/><circle cx="2527.1" cy="1401.9" r="5.2"/><circle cx="2548.6" cy="1363.0" r="5.2"/><circle cx="2570.2" cy="1396.4" r="5.2"/><circle cx="2591.7" cy="1401.5" r="5.2"/><circle cx="2613.3" cy="1427.4" r="5.2"/><circle cx="2634.8" cy="1377.2" r="5.2"/><circle cx="2656.4" cy="1341.9" r="5.2"/><circle cx="2677.9" cy="1365.8" r="5.2"/><circle cx="2699.4" cy="1198.4" r="5.2"/><circle cx="2721.0" cy="1426.6" r="5.2"/><circle cx="2742.5" cy="1418.3" r="5.2"/><circle cx="2764.1" cy="1429.7" r="5.2"/><circle cx="2785.6" cy="1437.5" r="5.2"/><circle cx="2807.2" cy="1420.7" r="5.2"/><circle cx="2828.7" cy="1371.3" r="5.2"/><circle cx="2850.3" cy="1442.6" r="5.2"/><circle cx="2871.8" cy="1461.1" r="5.2"/><circle cx="2893.3" cy="1393.2" r="5.2"/><circle cx="2914.9" cy="1425.8" r="5.2"/><circle cx="2936.4" cy="1435.6" r="5.2"/><circle cx="2958.0" cy="1426.6" r="5.2"/><circle cx="2979.5" cy="1486.6" r="5.2"/><circle cx="3001.1" cy="1404.2" r="5.2"/><circle cx="3022.6" cy="1470.9" r="5.2"/><circle cx="3044.2" cy="1371.7" r="5.2"/><circle cx="3065.7" cy="1444.2" r="5.2"/><circle cx="3087.2" cy="1448.5" r="5.2"/><circle cx="3108.8" cy="1433.6" r="5.2"/><circle cx="3130.3" cy="1464.6" r="5.2"/><circle cx="3151.9" cy="1397.2" r="5.2"/><circle cx="3173.4" cy="1368.1" r="5.2"/><circle cx="3195.0" cy="1463.8" r="5.2"/><circle cx="3216.5" cy="1441.9" r="5.2"/><circle cx="3238.1" cy="1440.3" r="5.2"/><circle cx="3259.6" cy="1414.0" r="5.2"/><circle cx="3281.1" cy="1467.0" r="5.2"/><circle cx="3302.7" cy="1381.5" r="5.2"/><circle cx="3324.2" cy="1442.6" r="5.2"/><circle cx="3345.8" cy="1454.4" r="5.2"/><circle cx="3367.3" cy="1435.6" r="5.2"/><circle cx="3388.9" cy="1476.0" r="5.2"/><circle cx="3410.4" cy="1412.8" r="5.2"/><circle cx="3432.0" cy="1447.3" r="5.2"/><circle cx="3453.5" cy="1422.3" r="5.2"/><circle cx="3475.0" cy="1453.6" r="5.2"/><circle cx="3496.6" cy="1467.7" r="5.2"/><circle cx="3518.1" cy="1438.3" r="5.2"/><circle cx="3539.7" cy="1463.8" r="5.2"/><circle cx="3561.2" cy="1384.6" r="5.2"/><circle cx="3582.8" cy="1448.5" r="5.2"/><circle cx="3604.3" cy="1443.4" r="5.2"/><circle cx="3625.9" cy="1449.7" r="5.2"/><circle cx="3647.4" cy="1417.9" r="5.2"/><circle cx="3669.0" cy="1407.4" r="5.2"/><circle cx="3690.5" cy="1434.0" r="5.2"/><circle cx="3712.0" cy="1406.6" r="5.2"/><circle cx="3733.6" cy="1453.2" r="5.2"/><circle cx="3755.1" cy="1459.9" r="5.2"/><circle cx="3776.7" cy="1432.8" r="5.2"/><circle cx="3798.2" cy="1490.5" r="5.2"/><circle cx="3819.8" cy="1412.8" r="5.2"/><circle cx="3841.3" cy="1438.7" r="5.2"/><circle cx="3862.9" cy="1453.6" r="5.2"/><circle cx="3884.4" cy="1471.3" r="5.2"/><circle cx="3905.9" cy="1445.4" r="5.2"/><circle cx="3927.5" cy="1434.8" r="5.2"/><circle cx="3949.0" cy="1438.7" r="5.2"/><circle cx="3970.6" cy="1398.7" r="5.2"/><circle cx="3992.1" cy="1464.2" r="5.2"/><circle cx="4013.7" cy="1454.4" r="5.2"/><circle cx="4035.2" cy="1470.9" r="5.2"/><circle cx="4056.8" cy="1406.2" r="5.2"/><circle cx="4078.3" cy="1378.7" r="5.2"/><circle cx="4099.8" cy="1459.9" r="5.2"/><circle cx="4121.4" cy="1416.8" r="5.2"/><circle cx="4142.9" cy="1460.3" r="5.2"/><circle cx="4164.5" cy="1439.5" r="5.2"/><circle cx="4186.0" cy="1378.7" r="5.2"/><circle cx="4207.6" cy="1439.5" r="5.2"/><circle cx="4229.1" cy="1436.0" r="5.2"/></g>
<circle cx="122.1" cy="908" r="15" fill="#67BBAF"/>
<text class="lg" transform="translate(152.96 920.80) scale(1.0382 1)" style="letter-spacing:0">Total Shards 43.8 /s</text>
<circle cx="2240.6" cy="908" r="15" fill="#67BBAF"/>
<text class="lg" transform="translate(2270.44 920.80) scale(1.0138 1)" style="letter-spacing:0">Search Latency 1.54 ms</text>
<circle cx="122.2" cy="1595.9" r="15" fill="#67BBAF"/>
<text class="lg" transform="translate(153.50 1608.20) scale(1.0161 1)" style="letter-spacing:0">Total Shards 1,794.3 /s</text>
<circle cx="530.1" cy="1595.9" r="15" fill="#4973A9"/>
<text class="lg" transform="translate(560.79 1608.20) scale(1.0332 1)" style="letter-spacing:0">Primary Shards 900 /s</text>
<circle cx="2240.6" cy="1595.9" r="15" fill="#67BBAF"/>
<text class="lg" transform="translate(2270.54 1608.20) scale(1.0184 1)" style="letter-spacing:0">Indexing Latency 0.21 ms</text>
</svg>
</body></html>
